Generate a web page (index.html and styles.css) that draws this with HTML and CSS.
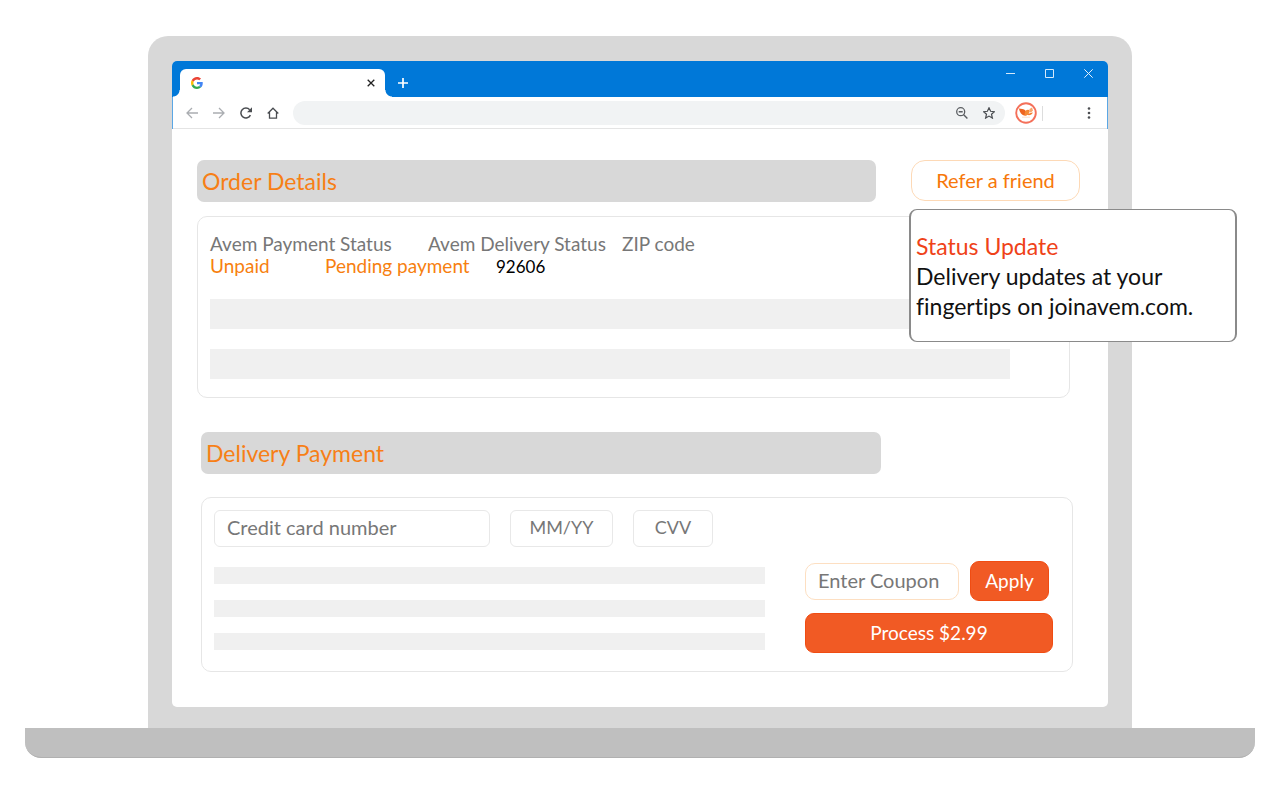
FILE: index.html
```html
<!DOCTYPE html>
<html lang="en">
<head>
<meta charset="utf-8">
<meta name="viewport" content="width=device-width, initial-scale=1">
<title>Avem order details</title>
<link rel="stylesheet" href="styles.css">
</head>
<body>
<div class="laptop">
  <div class="lid">
    <div class="screen">
      <header class="tabstrip">
        <div class="tab">
          <svg class="favicon" width="12" height="12" viewBox="0 0 48 48" aria-hidden="true">
            <path fill="#EA4335" d="M24 9.5c3.5 0 6.700 1.200 9.200 3.600l6.900-6.900C35.900 2.400 30.500 0 24 0 14.600 0 6.500 5.400 2.600 13.200l8 6.200C12.400 13.700 17.700 9.500 24 9.500z"/>
            <path fill="#4285F4" d="M47 24.600c0-1.600-.2-3.100-.4-4.600H24v9h12.900c-.6 3-2.200 5.500-4.700 7.200l7.700 6C44.400 38 47 32 47 24.600z"/>
            <path fill="#FBBC05" d="M10.500 28.600c-.5-1.500-.8-3-.8-4.600s.3-3.100.8-4.600l-8-6.200C.9 16.500 0 20.100 0 24s.9 7.500 2.600 10.800z"/>
            <path fill="#34A853" d="M24 48c6.500 0 11.900-2.100 15.900-5.800l-7.700-6c-2.200 1.500-4.900 2.300-8.200 2.300-6.300 0-11.600-4.200-13.500-9.900l-8 6.200C6.500 42.600 14.600 48 24 48z"/>
          </svg>
          <button class="icon-btn" aria-label="Close tab"><svg width="8" height="8" viewBox="0 0 8 8"><path d="M.7.700l6.600 6.600M7.300.7L.7 7.300" stroke="#222" stroke-width="1.300"/></svg></button>
        </div>
        <button class="icon-btn new-tab" aria-label="New tab"><svg width="10" height="10" viewBox="0 0 10 10"><path d="M5 0v10M0 5h10" stroke="#fff" stroke-width="1.700"/></svg></button>
        <div class="window-controls">
          <button class="icon-btn" aria-label="Minimize"><svg width="9" height="9" viewBox="0 0 9 9"><path d="M0 4.500h9" stroke="#d5e9fa"/></svg></button>
          <button class="icon-btn" aria-label="Maximize"><svg width="9" height="9" viewBox="0 0 9 9"><path d="M.5.500h8v8h-8z" fill="none" stroke="#d5e9fa"/></svg></button>
          <button class="icon-btn" aria-label="Close window"><svg width="9" height="9" viewBox="0 0 9 9"><path d="M.3.300l8.400 8.400M8.700.3L.3 8.700" stroke="#e4f1fc"/></svg></button>
        </div>
      </header>
      <nav class="toolbar" aria-label="Browser">
        <button class="icon-btn" aria-label="Back"><svg width="12" height="12" viewBox="0 0 12 12"><path d="M12 6H1M6 1L1 6l5 5" fill="none" stroke="#aaadb1" stroke-width="1.300"/></svg></button>
        <button class="icon-btn" aria-label="Forward"><svg width="12" height="12" viewBox="0 0 12 12"><path d="M0 6h11M6 1l5 5-5 5" fill="none" stroke="#aaadb1" stroke-width="1.300"/></svg></button>
        <button class="icon-btn" aria-label="Reload"><svg width="12" height="12" viewBox="0 0 12 12"><path d="M10.400 8.200A5 5 0 1 1 9.700 2.700" fill="none" stroke="#4b4e52" stroke-width="1.500"/><path d="M12 .3v5H7z" fill="#4b4e52"/></svg></button>
        <button class="icon-btn" aria-label="Home"><svg width="12" height="12" viewBox="0 0 12 12"><path d="M.7 6.500L6 1.200l5.300 5.300M2.500 5v6.200h7V5" fill="none" stroke="#4b4e52" stroke-width="1.300"/></svg></button>
        <div class="omnibox">
          <input class="address" type="text" aria-label="Address">
          <button class="icon-btn" aria-label="Zoom out"><svg width="12" height="12" viewBox="0 0 12 12"><circle cx="4.700" cy="4.700" r="4" fill="none" stroke="#5b5e62" stroke-width="1.300"/><path d="M2.700 4.700h4M7.700 7.700l3.700 3.700" stroke="#5b5e62" stroke-width="1.400"/></svg></button>
          <button class="icon-btn" aria-label="Bookmark"><svg width="12" height="12" viewBox="0 0 12 12"><path d="M6 .8l1.600 3.500 3.800.4-2.900 2.500.9 3.900L6 9.100l-3.400 2 .9-3.900L.6 4.700l3.800-.4z" fill="none" stroke="#4b4e52" stroke-width="1.200"/></svg></button>
        </div>
        <button class="icon-btn avem" aria-label="Avem"><svg width="22" height="22" viewBox="0 0 22 22"><circle cx="11" cy="11" r="9.800" fill="#fff" stroke="#f4705a" stroke-width="1.900"/><path d="M4 6.500c2 .3 4.500 0 7 2.500 1-1.300 2.500-1.500 3.500-.5-.3 3-2.500 5.500-5 5C6.500 13 4.500 10 4 6.500z" fill="#ee6420"/><path d="M10 9.500c1.500-1.500 3-2 4.500-.5 0 2.500-2 4.500-5 4.500z" fill="#f58a35"/><path d="M14.500 7l2.500-1.500 1 3-2 2-1.500-.5z" fill="#f9a66a"/><path d="M12.500 12.500c1.500-1 3-2 5.500-2-1 2-3 3-5.500 2.500z" fill="#f57b2c"/><path d="M7 15.200h8" stroke="#fbdccb"/></svg></button>
        <span class="divider"></span>
        <button class="icon-btn menu" aria-label="Menu"><svg width="4" height="12" viewBox="0 0 4 12"><g fill="#4b4e52"><circle cx="2" cy="1.500" r="1.300"/><circle cx="2" cy="6" r="1.300"/><circle cx="2" cy="10.500" r="1.300"/></g></svg></button>
      </nav>
      <main class="page">
        <div class="top-row">
          <h1 class="band">Order Details</h1>
          <button class="refer">Refer a friend</button>
        </div>
        <section class="card order">
          <div class="labels"><span>Avem Payment Status</span><span>Avem Delivery Status</span><span>ZIP code</span></div>
          <div class="values"><span>Unpaid</span><span>Pending payment</span><span class="zip">92606</span></div>
          <div class="bar tall first"></div>
          <div class="bar tall"></div>
        </section>
        <div class="payment-section">
          <h2 class="band">Delivery Payment</h2>
          <form class="card payment">
            <div class="fields">
              <input class="field number" type="text" placeholder="Credit card number" aria-label="Credit card number">
              <input class="field expiry" type="text" placeholder="MM/YY" aria-label="MM/YY">
              <input class="field cvv" type="text" placeholder="CVV" aria-label="CVV">
            </div>
            <div class="checkout">
              <div class="summary">
                <div class="bar"></div>
                <div class="bar"></div>
                <div class="bar"></div>
              </div>
              <div class="actions">
                <div class="coupon-row">
                  <input class="field coupon" type="text" placeholder="Enter Coupon" aria-label="Enter Coupon">
                  <button class="primary apply" type="button">Apply</button>
                </div>
                <button class="primary" type="button">Process $2.99</button>
              </div>
            </div>
          </form>
        </div>
      </main>
    </div>
    <aside class="notice">
      <h2 class="notice-title">Status Update</h2>
      <p class="notice-text">Delivery updates at your fingertips on joinavem.com.</p>
    </aside>
  </div>
  <div class="base"></div>
</div>
</body>
</html>
```
FILE: styles.css
```css
* { box-sizing: border-box; }

body {
  margin: 0;
  background: #fff;
  font-family: Lato, sans-serif;
  font-size: 19px;
  font-variant-ligatures: none;
  color: #777;
}

h1, h2, p { margin: 0; font-weight: 400; }
button, input { font: inherit; }
svg { display: block; }

/* Laptop frame */
.laptop { padding: 36px 25px 0; }

.lid {
  position: relative;
  margin: 0 123px;
  padding: 25px 24px 21px;
  background: #d8d8d8;
  border-radius: 20px 20px 0 0;
}

.base {
  height: 30px;
  background: #bfbfbf;
  border-bottom: 1px solid #b0b0b0;
  border-radius: 0 0 16px 16px;
}

.screen {
  background: #fff;
  border-radius: 5px;
  overflow: hidden;
}

/* Browser chrome */
.icon-btn {
  padding: 0;
  border: 0;
  background: none;
}

.tabstrip {
  display: flex;
  align-items: flex-end;
  height: 36px;
  padding-left: 8px;
  background: #0078d8;
}

.tab {
  position: relative;
  display: flex;
  align-items: center;
  justify-content: space-between;
  width: 205px;
  height: 28px;
  padding: 0 10px 0 11px;
  background: #fff;
  border-radius: 6px 6px 0 0;
}

.tab::before,
.tab::after {
  content: "";
  position: absolute;
  bottom: 0;
  width: 7px;
  height: 7px;
}

.tab::before {
  right: 100%;
  background: radial-gradient(circle at 0 0, #0078d8 6px, #fff 7px);
}

.tab::after {
  left: 100%;
  background: radial-gradient(circle at 100% 0, #0078d8 6px, #fff 7px);
}

.new-tab { padding: 0 13px 9px; }

.window-controls {
  display: flex;
  align-self: flex-start;
  gap: 30px;
  margin-left: auto;
  padding: 8px 15px 0 0;
}

.toolbar {
  display: flex;
  align-items: center;
  gap: 15px;
  height: 32px;
  padding: 0 16px 0 13px;
  border: solid #5ba7e5;
  border-width: 0 1px;
  box-shadow: inset 0 -1px #e4e4e4;
}

.omnibox {
  display: flex;
  flex: 1;
  align-items: center;
  gap: 15px;
  height: 24px;
  margin-left: -1px;
  padding-right: 10px;
  background: #f1f3f4;
  border-radius: 12px;
}

.address {
  flex: 1;
  min-width: 0;
  height: 24px;
  padding: 0 12px;
  border: 0;
  background: none;
  font-size: 13px;
}

.avem { margin: 0 -10px 0 -5px; }
.divider { width: 1px; height: 15px; background: #ddd; }
.menu { margin-left: 29px; }

/* Page */
.page { padding: 31px 28px 35px 25px; }

.top-row { display: flex; gap: 35px; }

.band {
  flex: 1;
  height: 42px;
  padding-left: 5px;
  background: #d8d8d8;
  border-radius: 7px;
  color: #f77f16;
  font-size: 23px;
  line-height: 42px;
}

.refer {
  width: 169px;
  height: 41px;
  padding: 0 0 2px;
  border: 1px solid #fdd9b6;
  border-radius: 14px;
  background: #fff;
  color: #f7780b;
  font-size: 20px;
}

.card {
  border: 1px solid #e6e6e6;
  border-radius: 10px;
}

.order {
  margin: 14px 10px 0 0;
  padding: 16px 59px 18px 12px;
}

.labels,
.values {
  display: grid;
  align-items: baseline;
  line-height: 22px;
}

.labels { grid-template-columns: 218px 194px auto; }

.values {
  grid-template-columns: 115px 171px auto;
  color: #f7800f;
}

.zip { color: #000; font-size: 17px; }

.bar { height: 17px; background: #f0f0f0; }
.tall { height: 30px; }
.first { margin: 21px 0 20px; }

.payment-section { margin: 34px 7px 0 4px; }
.payment-section .band { width: 78%; }

.payment { margin-top: 23px; padding: 12px 19px 18px 12px; }

.fields { display: flex; gap: 20px; }

.field {
  min-width: 0;
  height: 37px;
  padding: 0 12px 3px;
  border: 1px solid #e8e8e8;
  border-radius: 6px;
  background: #fff;
  font-size: 20px;
}

.field::placeholder { color: #777; opacity: 1; }
.number { width: 276px; }
.expiry { width: 103px; font-size: 18px; text-align: center; }
.cvv { width: 80px; font-size: 18px; text-align: center; }

.checkout {
  display: flex;
  justify-content: space-between;
  gap: 40px;
  margin-top: 14px;
}

.summary {
  display: flex;
  flex: 1;
  flex-direction: column;
  gap: 16px;
  padding-top: 6px;
}

.actions {
  display: flex;
  flex-direction: column;
  gap: 12px;
  width: 248px;
}

.coupon-row {
  display: flex;
  align-items: center;
  gap: 11px;
}

.coupon {
  width: 154px;
  border-color: #fddfc2;
  border-radius: 10px;
}

.primary {
  height: 40px;
  padding: 0 0 2px;
  border: 1px solid #f04c12;
  border-radius: 9px;
  background: #f15a24;
  color: #fff;
}

.apply { width: 79px; }

/* Notification over the screen edge */
.notice {
  position: absolute;
  top: 173px;
  right: -105px;
  width: 328px;
  padding: 21px 10px 20px 5px;
  background: #fff;
  border: solid #8a8a8a;
  border-width: 1px 2px;
  border-radius: 8px;
  color: #111;
  font-size: 23px;
  line-height: 30px;
}

.notice-title { color: #ef4218; font-size: 23px; }
```
